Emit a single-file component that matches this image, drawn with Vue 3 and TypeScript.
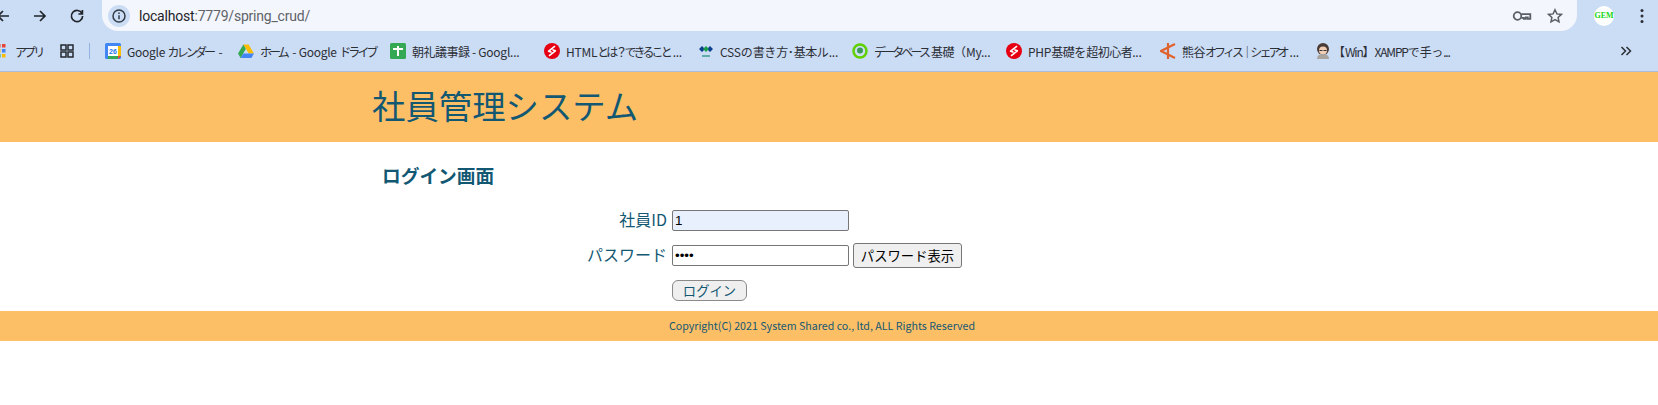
<script setup lang="ts">
interface Bookmark {
  label: string
  icon: string
  width: number
  tight?: boolean
}

interface Run {
  text: string
  kind: string
}

const bookmarks: Bookmark[] = [
  { label: 'Google カレンダー -', icon: 'calendar', width: 133 },
  { label: 'ホーム - Google ドライブ', icon: 'drive', width: 152 },
  { label: '朝礼議事録 - Googl...', icon: 'sheet', width: 154 },
  { label: 'HTMLとは？できること...', icon: 'shiny', width: 154 },
  { label: 'CSSの書き方･基本ル...', icon: 'css', width: 154 },
  { label: 'データベース基礎（My...', icon: 'db', width: 154 },
  { label: 'PHP基礎を超初心者...', icon: 'shiny', width: 154 },
  { label: '熊谷オフィス｜シェアオ...', icon: 'kuma', width: 155 },
  { label: '【Win】XAMPPで手っ...', icon: 'face', width: 140, tight: true }
]

// the reference's UI font has narrow kana, so tighten them run by run
const splitRuns = (label: string): Run[] => {
  const parts = label.match(/[\u3040-\u30ff\uff61-\uff9f｜？（）【】]+|[\u4e00-\u9fff]+|[^\u3040-\u30ff\uff61-\uff9f｜？（）【】\u4e00-\u9fff]+/g) ?? []
  return parts.map((text) => {
    if (/[\u4e00-\u9fff]/.test(text)) return { text, kind: 'kanji' }
    if (/[\u3040-\u30ff\uff61-\uff9f｜？（）【】]/.test(text)) return { text, kind: 'kana' }
    return { text, kind: 'latin' }
  })
}
</script>

<template>
  <div class="page">
    <div class="chrome">
      <div class="toolbar">
        <div class="nav">
          <svg class="nav-icon" viewBox="0 0 16 16"><path d="M14 8H3M8 3 3 8l5 5" /></svg>
          <svg class="nav-icon" viewBox="0 0 16 16"><path d="M2 8h11M8 3l5 5-5 5" /></svg>
          <svg class="nav-icon" viewBox="0 0 16 16"><path d="M13 5.5A5.6 5.6 0 1 0 13.6 8M13.4 2v4h-4" /></svg>
        </div>
        <div class="omnibox">
          <span class="site-info">
            <svg viewBox="0 0 16 16" width="16" height="16"><circle cx="8" cy="8" r="6" /><path d="M8 7.2v4M8 4.6v1.4" /></svg>
          </span>
          <span class="url">localhost<span class="url-path">:7779/spring_crud/</span></span>
          <span class="omni-end">
            <svg class="key" viewBox="0 0 20 14" width="20" height="14"><circle cx="5.5" cy="7" r="3.8" /><path d="M9.3 5.2h9v4.6h-2.5V8.3h-2v1.5h-2v-1H9.3" /></svg>
            <svg viewBox="0 0 16 16" width="16" height="16"><path d="m8 1.8 1.9 4.1 4.5.5-3.3 3 .9 4.4L8 11.6l-4 2.2.9-4.4-3.3-3 4.5-.5z" /></svg>
          </span>
        </div>
        <div class="profile">
          <span class="avatar">GEM</span>
          <svg class="dots" viewBox="0 0 4 16" width="4" height="16"><circle cx="2" cy="2.5" r="1.5" /><circle cx="2" cy="8" r="1.5" /><circle cx="2" cy="13.5" r="1.5" /></svg>
        </div>
      </div>
      <div class="bookmarks">
        <div class="apps">
          <svg viewBox="0 0 14 14" width="14" height="14">
            <rect x="-3" y="0" width="3.5" height="3.5" fill="#ea4335" />
            <rect x="2" y="0" width="3.5" height="3.5" fill="#ea4335" />
            <rect x="-3" y="5" width="3.5" height="3.5" fill="#fbbc04" />
            <rect x="2" y="5" width="3.5" height="3.5" fill="#4285f4" />
            <rect x="-3" y="10" width="3.5" height="3.5" fill="#34a853" />
            <rect x="2" y="10" width="3.5" height="3.5" fill="#fbbc04" />
          </svg>
          <span class="kana">アプリ</span>
        </div>
        <svg class="grid" viewBox="0 0 14 14" width="14" height="14">
          <rect x="1" y="1" width="5" height="5" /><rect x="8" y="1" width="5" height="5" />
          <rect x="1" y="8" width="5" height="5" /><rect x="8" y="8" width="5" height="5" />
        </svg>
        <span class="sep"></span>
        <div v-for="b in bookmarks" :key="b.label" :class="['bookmark', { tight: b.tight }]" :style="{ width: b.width + 'px' }">
          <svg v-if="b.icon === 'calendar'" viewBox="0 0 16 16" width="16" height="16">
            <rect width="16" height="16" rx="1.5" fill="#4285f4" />
            <rect x="3" y="3" width="10" height="10" fill="#fff" />
            <path d="M13 3h3v10h-3z" fill="#fbbc04" />
            <path d="M3 13h10v3H3z" fill="#34a853" />
            <path d="M13 13h3l-3 3z" fill="#ea4335" />
            <text x="8" y="11.2" class="cal-text">26</text>
          </svg>
          <svg v-else-if="b.icon === 'drive'" viewBox="0 0 16 16" width="16" height="16">
            <path d="M5.4 1.5h5.2L16 10.6h-5.3z" fill="#fbbc04" />
            <path d="M5.4 1.5 0 10.6l2.6 4.3 5.2-9z" fill="#34a853" />
            <path d="M2.6 14.9h10.8l2.6-4.3H5.3z" fill="#4285f4" />
          </svg>
          <svg v-else-if="b.icon === 'sheet'" viewBox="0 0 16 16" width="16" height="16">
            <rect width="16" height="16" rx="1.5" fill="#34a853" />
            <path d="M3 6h10M8 3v10" stroke="#fff" stroke-width="2" fill="none" />
          </svg>
          <svg v-else-if="b.icon === 'shiny'" viewBox="0 0 16 16" width="16" height="16">
            <circle cx="8" cy="8" r="8" fill="#e60012" />
            <path d="M11 3.2 4.6 8.2l3 1M8.4 6.800l3 1L5 12.800" stroke="#fff" stroke-width="1.6" stroke-linejoin="round" fill="none" />
          </svg>
          <svg v-else-if="b.icon === 'css'" viewBox="0 0 16 16" width="16" height="16">
            <path d="M1 6 4 3l3 3-3 3zM9 6l3-3 3 3-3 3z" fill="#0b3f8f" />
            <path d="M5 6l3-3 3 3-3 3z" fill="#1a9e4b" />
            <path d="M4 13h8" stroke="#3b9e8a" stroke-width="1.5" />
          </svg>
          <svg v-else-if="b.icon === 'db'" viewBox="0 0 16 16" width="16" height="16">
            <circle cx="8" cy="8" r="6.5" fill="none" stroke="#5fd000" stroke-width="2.5" />
            <circle cx="8" cy="7.5" r="3" fill="#3f9a5a" />
          </svg>
          <svg v-else-if="b.icon === 'kuma'" viewBox="0 0 16 16" width="16" height="16">
            <path d="M8 0v16M15 1 1 8l14 7" stroke="#e0622c" stroke-width="2.2" fill="none" />
          </svg>
          <svg v-else viewBox="0 0 16 16" width="16" height="16">
            <circle cx="8" cy="6" r="6" fill="#4a3a34" />
            <circle cx="8" cy="7.5" r="4" fill="#f0cdb4" />
            <path d="M2 16c0-4 3-5 6-5s6 1 6 5z" fill="#a9a39e" />
            <path d="M4.500 7.500h3M8.500 7.500h3" stroke="#333" stroke-width="1" />
          </svg>
          <span class="bm-label"><span v-for="(run, i) in splitRuns(b.label)" :key="i" :class="run.kind">{{ run.text }}</span></span>
        </div>
        <svg class="more" viewBox="0 0 12 10" width="12" height="10"><path d="m1.5 1 4 4-4 4M6.5 1l4 4-4 4" /></svg>
      </div>
    </div>

    <header class="site-header">
      <h1>社員管理システム</h1>
    </header>

    <main class="content">
      <h2>ログイン画面</h2>
      <form class="login" @submit.prevent>
        <label class="field-label">社員ID</label>
        <div class="field"><input class="text-input filled" type="text" value="1" /></div>
        <label class="field-label">パスワード</label>
        <div class="field">
          <input class="text-input" type="password" value="1234" />
          <button class="show-btn" type="button">パスワード表示</button>
        </div>
        <span></span>
        <div class="field"><button class="login-btn" type="submit">ログイン</button></div>
      </form>
    </main>

    <footer class="site-footer">Copyright(C) 2021 System Shared co., ltd, ALL Rights Reserved</footer>
  </div>
</template>

<style>
html, body {
  margin: 0;
  background: #fff;
}
</style>

<style scoped>
.page {
  width: 1658px;
  height: 405px;
  overflow: hidden;
  font-family: "Noto Sans CJK JP", "Noto Sans", sans-serif;
  color: #135873;
}

.chrome {
  background: #cbdcf5;
  height: 71px;
  border-bottom: 1px solid #a9bcdc;
}

.toolbar {
  display: flex;
  align-items: center;
  height: 31px;
}

.nav {
  display: flex;
  align-items: center;
  gap: 21px;
  width: 107px;
  margin-left: -5px;
  flex-shrink: 0;
}

.nav-icon {
  width: 16px;
  height: 16px;
  fill: none;
  stroke: #20242b;
  stroke-width: 1.7;
  flex-shrink: 0;
}

.omnibox {
  flex: 1;
  height: 31px;
  display: flex;
  align-items: center;
  background: #f3f6fc;
  border-radius: 0 0 16px 16px;
  font-family: Roboto, sans-serif;
  font-size: 14px;
  letter-spacing: -0.2px;
}

.site-info {
  width: 22px;
  height: 22px;
  margin-left: 6px;
  border-radius: 50%;
  background: #cbdcf5;
  display: flex;
  align-items: center;
  justify-content: center;
}

.site-info svg {
  fill: none;
  stroke: #333a44;
  stroke-width: 1.5;
}

.url {
  margin-left: 9px;
  color: #1f2328;
}

.url-path {
  color: #5f6368;
}

.omni-end {
  margin-left: auto;
  margin-right: 14px;
  display: flex;
  align-items: center;
  gap: 15px;
}

.omni-end svg {
  fill: none;
  stroke: #5a5f66;
  stroke-width: 1.5;
}

.omni-end .key {
  stroke-width: 1.8;
}

.profile {
  width: 81px;
  display: flex;
  align-items: center;
  flex-shrink: 0;
}

.avatar {
  width: 20px;
  height: 20px;
  margin-left: 17px;
  border-radius: 50%;
  background: #fff;
  color: #12d612;
  font: bold 8px "Liberation Serif", serif;
  display: flex;
  align-items: center;
  justify-content: center;
}

.dots {
  margin-left: 26px;
  fill: #2a2e35;
}

.bookmarks {
  display: flex;
  align-items: center;
  height: 40px;
  font-size: 12px;
  color: #2b2f36;
}

.apps {
  display: flex;
  align-items: center;
  gap: 4px;
  width: 60px;
  flex-shrink: 0;
}

.apps svg {
  margin-right: -3px;
  overflow: visible;
}

.latin {
  letter-spacing: -0.25px;
}

.kana {
  letter-spacing: -2.9px;
  margin-right: 2.9px;
}

.kanji {
  letter-spacing: -0.5px;
}

.tight .bm-label {
  margin-left: -4px;
}

.tight .latin {
  letter-spacing: -1.2px;
}

.grid {
  fill: none;
  stroke: #23272e;
  stroke-width: 1.5;
  flex-shrink: 0;
}

.sep {
  width: 1px;
  height: 16px;
  margin: 0 15px;
  background: #93b4e2;
  flex-shrink: 0;
}

.bookmark {
  display: flex;
  align-items: center;
  gap: 6px;
  flex-shrink: 0;
}

.bookmark svg {
  flex-shrink: 0;
}

.bm-label {
  white-space: nowrap;
}

.cal-text {
  font: bold 7px "Liberation Sans", sans-serif;
  text-anchor: middle;
  fill: #1a73e8;
}

.more {
  margin-left: auto;
  margin-right: 26px;
  fill: none;
  stroke: #2b2f36;
  stroke-width: 1.5;
  flex-shrink: 0;
}

.site-header {
  background: #fdbf66;
  height: 70px;
  padding-left: 372px;
  box-sizing: border-box;
}

.site-header h1 {
  margin: 0;
  font-size: 33.4px;
  font-weight: 400;
  line-height: 66px;
}

.content {
  height: 169px;
  box-sizing: border-box;
  padding: 21px 0 0 382px;
}

.content h2 {
  margin: 0;
  font-size: 18.72px;
  font-weight: 700;
  line-height: 24px;
}

.login {
  display: grid;
  grid-template-columns: 285px auto;
  grid-template-rows: 35px 35px 34px;
  margin-top: 16px;
  justify-content: start;
  align-items: center;
}

.field-label {
  font-size: 16px;
  text-align: right;
  padding-bottom: 4px;
}

.field {
  display: flex;
  align-items: center;
  gap: 4px;
  margin-left: 5px;
}

.text-input {
  width: 177px;
  height: 21px;
  box-sizing: border-box;
  padding: 1px 2px;
  border: 1px solid #767676;
  border-radius: 2px;
  font-family: "Liberation Sans", sans-serif;
  font-size: 13.333px;
  color: #000;
  background: #fff;
}

.text-input.filled {
  background: #e8f0fe;
}

.show-btn {
  height: 25px;
  width: 109px;
  padding: 0;
  border: 1px solid #767676;
  border-radius: 3px;
  background: #efefef;
  color: #000;
  font-family: inherit;
  font-size: 13.333px;
}

.login-btn {
  width: 75px;
  height: 21px;
  padding: 0;
  border: 1px solid #8a8a8a;
  border-radius: 6px;
  background: #efefef;
  color: #135873;
  font-family: inherit;
  font-size: 13.333px;
}

.site-footer {
  background: #fdbf66;
  height: 30px;
  line-height: 30px;
  text-align: center;
  font-size: 10.67px;
  padding-right: 14px;
}
</style>
